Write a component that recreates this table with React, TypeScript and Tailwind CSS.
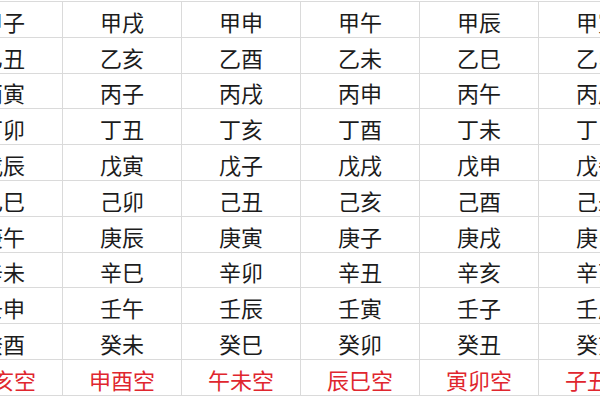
const columns = [
    ["甲子", "乙丑", "丙寅", "丁卯", "戊辰", "己巳", "庚午", "辛未", "壬申", "癸酉", "戌亥空"],
    ["甲戌", "乙亥", "丙子", "丁丑", "戊寅", "己卯", "庚辰", "辛巳", "壬午", "癸未", "申酉空"],
    ["甲申", "乙酉", "丙戌", "丁亥", "戊子", "己丑", "庚寅", "辛卯", "壬辰", "癸巳", "午未空"],
    ["甲午", "乙未", "丙申", "丁酉", "戊戌", "己亥", "庚子", "辛丑", "壬寅", "癸卯", "辰巳空"],
    ["甲辰", "乙巳", "丙午", "丁未", "戊申", "己酉", "庚戌", "辛亥", "壬子", "癸丑", "寅卯空"],
    ["甲寅", "乙卯", "丙辰", "丁巳", "戊午", "己未", "庚申", "辛酉", "壬戌", "癸亥", "子丑空"],
];

export default function App() {
    const rows = columns[0].map((_, r) => columns.map((col) => col[r]));

    return (
        <div className="h-[400px] w-[600px] overflow-hidden bg-white pt-px font-['Noto_Sans_CJK_SC',sans-serif]">
            <div className="-ml-[57px] grid w-[714px] grid-cols-[repeat(6,119px)] border-t border-l border-[#dadada]">
                {rows.map((row, r) =>
                    row.map((cell, c) => (
                        <div
                            key={`${r}-${c}`}
                            className={`flex h-[35.8px] items-center justify-center border-r border-b border-[#dadada] pt-[3px] text-[22px] leading-none ${
                                r === 10 ? "text-[#e0262e]" : "text-[#1c1c1c]"
                            }`}
                        >
                            {cell}
                        </div>
                    ))
                )}
            </div>
        </div>
    );
}
